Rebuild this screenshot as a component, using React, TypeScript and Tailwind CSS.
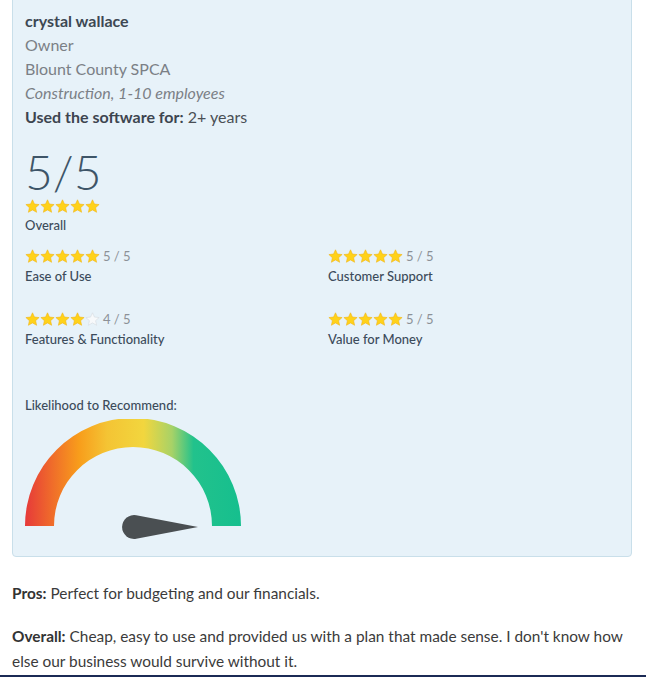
import React from "react";

const STAR_PATH =
  "M7.5 0.8 L9.45 5.05 L14.1 5.55 L10.6 8.65 L11.6 13.3 L7.5 10.9 L3.4 13.3 L4.4 8.65 L0.9 5.55 L5.55 5.05 Z";

function Star({ filled }: { filled: boolean }) {
  return (
    <svg width="15" height="15" viewBox="0 0 15 15" className="block">
      <path
        d={STAR_PATH}
        fill={filled ? "#ffd21a" : "#f7f9fb"}
        stroke={filled ? "#f2b619" : "#d5dadf"}
        strokeWidth="0.6"
        strokeLinejoin="round"
      />
    </svg>
  );
}

function Stars({ value }: { value: number }) {
  return (
    <div className="flex h-[15px]">
      {[1, 2, 3, 4, 5].map((i) => (
        <Star key={i} filled={i <= value} />
      ))}
    </div>
  );
}

function SubRating({ label, value }: { label: string; value: number }) {
  return (
    <div className="flex flex-col">
      <div className="flex items-center h-[15px]">
        <Stars value={value} />
        <span className="ml-[3px] text-[13px] leading-[15px] text-[#8c9197]">
          {value} / 5
        </span>
      </div>
      <div className="mt-[4px] text-[13px] leading-[16px] font-medium text-[#3c4b5b]">
        {label}
      </div>
    </div>
  );
}

function Gauge() {
  const cx = 109;
  const cy = 107;
  const ro = 108;
  const ri = 79;
  return (
    <svg width="220" height="122" viewBox="0 0 220 122" className="block">
      <defs>
        <linearGradient id="gaugeFill" x1="1" y1="0" x2="217" y2="0" gradientUnits="userSpaceOnUse">
          <stop offset="0" stopColor="#e6393a" />
          <stop offset="0.12" stopColor="#ef6a2b" />
          <stop offset="0.25" stopColor="#f89d1b" />
          <stop offset="0.38" stopColor="#f4c434" />
          <stop offset="0.55" stopColor="#f2d63e" />
          <stop offset="0.68" stopColor="#a8d267" />
          <stop offset="0.78" stopColor="#22c28c" />
          <stop offset="1" stopColor="#16bf8e" />
        </linearGradient>
      </defs>
      <path
        d={`M ${cx - ro} ${cy} A ${ro} ${ro} 0 0 1 ${cx + ro} ${cy} L ${cx + ri} ${cy} A ${ri} ${ri} 0 0 0 ${cx - ri} ${cy} Z`}
        fill="url(#gaugeFill)"
      />
      <path
        d="M174 108 L112.25 96.2 A12 12 0 1 0 112.25 119.8 Z"
        fill="#4a4f52"
      />
    </svg>
  );
}

export default function App() {
  return (
    <div
      className="w-[646px] h-[677px] overflow-hidden bg-white"
      style={{ fontFamily: "Lato, 'Open Sans', Arial, sans-serif" }}
    >
      <div className="ml-[12px] mr-[14px] -mt-[4px] border border-[#c9dfea] rounded-[4px] bg-[#e7f2f9] px-[12px] pt-[12px] pb-[15px]">
        <div className="text-[16px] leading-[24px]">
          <div className="font-bold text-[#3d4853]">crystal wallace</div>
          <div className="text-[#7b8086]">Owner</div>
          <div className="text-[#7b8086]">Blount County SPCA</div>
          <div className="italic text-[#7b8086]">Construction, 1-10 employees</div>
          <div className="text-[#4a4f55]">
            <span className="font-bold text-[#3d4550]">Used the software for:</span> 2+ years
          </div>
        </div>

        <div className="mt-[19px] h-[49px] text-[48px] leading-[48px] font-light text-[#3e5568]">
          5/5
        </div>
        <div className="mt-[2px]">
          <Stars value={5} />
        </div>
        <div className="mt-[3px] text-[13px] leading-[16px] font-medium text-[#3c4b5b]">
          Overall
        </div>

        <div className="mt-[16px] grid grid-cols-[303px_1fr] gap-y-[28px]">
          <SubRating label="Ease of Use" value={5} />
          <SubRating label="Customer Support" value={5} />
          <SubRating label="Features & Functionality" value={4} />
          <SubRating label="Value for Money" value={5} />
        </div>

        <div className="mt-[50px] text-[13px] leading-[16px] font-medium text-[#3c4b5b]">
          Likelihood to Recommend:
        </div>
        <div className="mt-[6px] -ml-[1px]">
          <Gauge />
        </div>
      </div>

      <div className="px-[12px] pt-[24px] text-[15.4px] leading-[25px] text-[#3b3b3b]">
        <p>
          <span className="font-bold text-[#333]">Pros:</span> Perfect for budgeting and our financials.
        </p>
        <p className="mt-[18px]">
          <span className="font-bold text-[#333]">Overall:</span> Cheap, easy to use and provided us with a plan that made sense. I don't know how else our business would survive without it.
        </p>
      </div>
      <div className="mt-[1px] h-[3px] bg-[#1b2a55]" />
    </div>
  );
}
